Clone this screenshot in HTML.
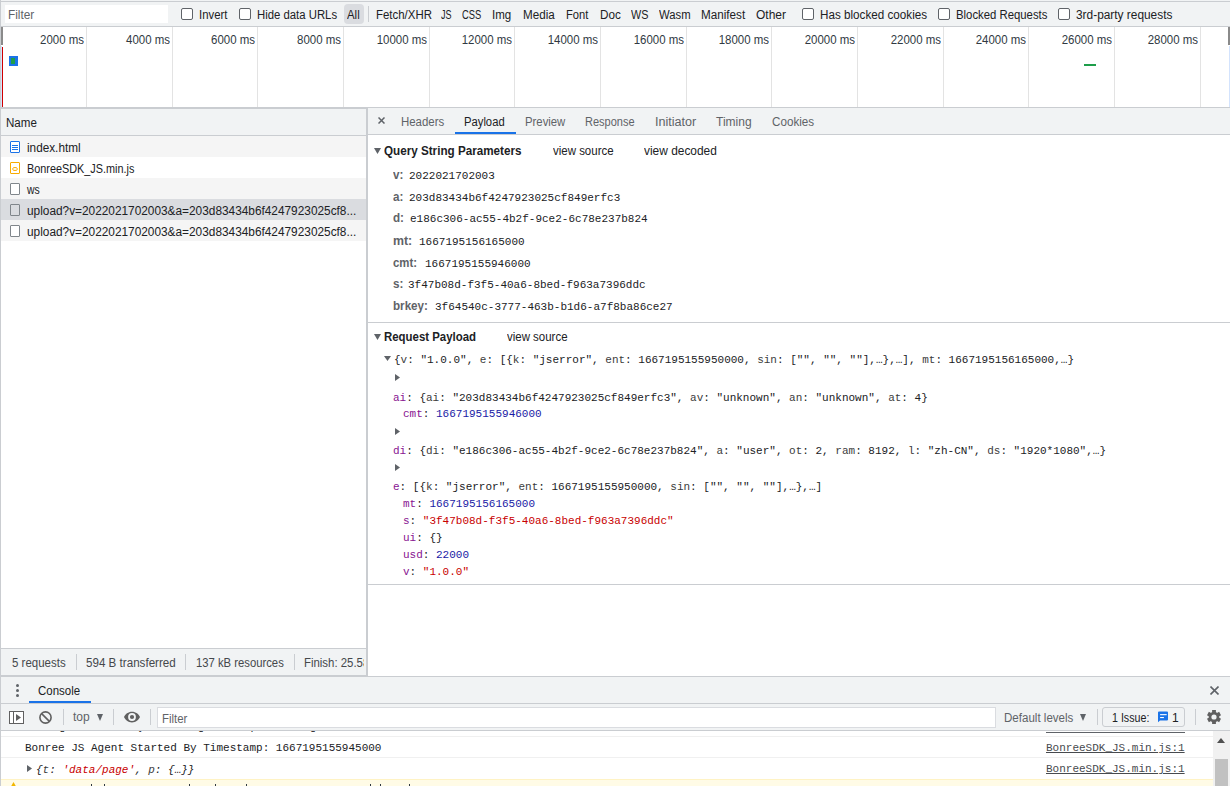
<!DOCTYPE html>
<html><head><meta charset="utf-8">
<style>
*{margin:0;padding:0;box-sizing:border-box}
html,body{width:1230px;height:786px;overflow:hidden;background:#fff;font-family:"Liberation Sans",sans-serif;font-size:12px;color:#202124}
.a{position:absolute}
.t{position:absolute;white-space:nowrap;line-height:14px;font-size:12px}
.m{position:absolute;white-space:nowrap;font-family:"Liberation Mono",monospace;font-size:11px;line-height:13px;color:#202124}
.cb{position:absolute;width:12px;height:12px;border:1px solid #5f6368;border-radius:2px;background:#fff}
.gl{position:absolute;top:27px;height:80px;width:1px;background:#e3e3e3}
.ic{position:absolute;left:10px;width:10px;height:12px;border:1px solid #80868b;border-radius:1px;background:#fff}
.k{color:#881391}
.n{color:#1a1aa6}
.s{color:#c80000}
.g{color:#3c3c3c}
.qk{font-weight:bold;color:#5f6368}
.tri-d{position:absolute;width:0;height:0;border-left:4px solid transparent;border-right:4px solid transparent;border-top:6px solid #5f6368}
.tri-r{position:absolute;width:0;height:0;border-top:3.5px solid transparent;border-bottom:3.5px solid transparent;border-left:5px solid #5f6368}
</style></head><body>
<div class="a" style="left:0;top:0;width:1px;height:786px;background:#cacdd1"></div>
<div class="a" style="left:1px;top:0px;width:1229px;height:26px;background:#f1f3f4;"></div>
<div class="a" style="left:0px;top:1px;width:1230px;height:1px;background:#cacdd1;"></div>
<div class="a" style="left:0px;top:26px;width:1230px;height:1px;background:#cacdd1;"></div>
<div class="a" style="left:5px;top:5px;width:163px;height:18px;background:#fff;"></div>
<div class="t" style="left:8px;top:8px;transform:scaleX(0.985);transform-origin:0 0;color:#5f6368">Filter</div>
<div class="cb" style="left:181px;top:8px"></div>
<div class="cb" style="left:239px;top:8px"></div>
<div class="cb" style="left:802px;top:8px"></div>
<div class="cb" style="left:938px;top:8px"></div>
<div class="cb" style="left:1058px;top:8px"></div>
<div class="t" style="left:199px;top:8px;transform:scaleX(0.945);transform-origin:0 0;">Invert</div>
<div class="t" style="left:257px;top:8px;transform:scaleX(0.945);transform-origin:0 0;">Hide data URLs</div>
<div class="a" style="left:344px;top:4px;width:20px;height:20px;background:#dadce0;border-radius:4px"></div>
<div class="t" style="left:347px;top:8px;transform:scaleX(0.95);transform-origin:0 0;">All</div>
<div class="a" style="left:368px;top:6px;width:1px;height:16px;background:#cacdd1;"></div>
<div class="t" style="left:376px;top:8px;transform:scaleX(0.953);transform-origin:0 0;">Fetch/XHR</div>
<div class="t" style="left:441px;top:8px;transform:scaleX(0.75);transform-origin:0 0;">JS</div>
<div class="t" style="left:462px;top:8px;transform:scaleX(0.78);transform-origin:0 0;">CSS</div>
<div class="t" style="left:492px;top:8px;transform:scaleX(0.96);transform-origin:0 0;">Img</div>
<div class="t" style="left:523px;top:8px;transform:scaleX(0.97);transform-origin:0 0;">Media</div>
<div class="t" style="left:566px;top:8px;transform:scaleX(0.93);transform-origin:0 0;">Font</div>
<div class="t" style="left:600px;top:8px;transform:scaleX(0.976);transform-origin:0 0;">Doc</div>
<div class="t" style="left:631px;top:8px;transform:scaleX(0.9);transform-origin:0 0;">WS</div>
<div class="t" style="left:659px;top:8px;transform:scaleX(0.94);transform-origin:0 0;">Wasm</div>
<div class="t" style="left:701px;top:8px;transform:scaleX(0.974);transform-origin:0 0;">Manifest</div>
<div class="t" style="left:756px;top:8px;">Other</div>
<div class="t" style="left:820px;top:8px;transform:scaleX(0.973);transform-origin:0 0;">Has blocked cookies</div>
<div class="t" style="left:956px;top:8px;transform:scaleX(0.945);transform-origin:0 0;">Blocked Requests</div>
<div class="t" style="left:1076px;top:8px;transform:scaleX(0.99);transform-origin:0 0;">3rd-party requests</div>
<div class="gl" style="left:86px"></div>
<div class="t" style="left:-116px;width:200px;text-align:right;top:33px;transform:scaleX(0.955);transform-origin:100% 0;color:#303942">2000 ms</div>
<div class="gl" style="left:172px"></div>
<div class="t" style="left:-30px;width:200px;text-align:right;top:33px;transform:scaleX(0.955);transform-origin:100% 0;color:#303942">4000 ms</div>
<div class="gl" style="left:257px"></div>
<div class="t" style="left:55px;width:200px;text-align:right;top:33px;transform:scaleX(0.955);transform-origin:100% 0;color:#303942">6000 ms</div>
<div class="gl" style="left:343px"></div>
<div class="t" style="left:141px;width:200px;text-align:right;top:33px;transform:scaleX(0.955);transform-origin:100% 0;color:#303942">8000 ms</div>
<div class="gl" style="left:429px"></div>
<div class="t" style="left:227px;width:200px;text-align:right;top:33px;transform:scaleX(0.955);transform-origin:100% 0;color:#303942">10000 ms</div>
<div class="gl" style="left:514px"></div>
<div class="t" style="left:312px;width:200px;text-align:right;top:33px;transform:scaleX(0.955);transform-origin:100% 0;color:#303942">12000 ms</div>
<div class="gl" style="left:600px"></div>
<div class="t" style="left:398px;width:200px;text-align:right;top:33px;transform:scaleX(0.955);transform-origin:100% 0;color:#303942">14000 ms</div>
<div class="gl" style="left:686px"></div>
<div class="t" style="left:484px;width:200px;text-align:right;top:33px;transform:scaleX(0.955);transform-origin:100% 0;color:#303942">16000 ms</div>
<div class="gl" style="left:771px"></div>
<div class="t" style="left:569px;width:200px;text-align:right;top:33px;transform:scaleX(0.955);transform-origin:100% 0;color:#303942">18000 ms</div>
<div class="gl" style="left:857px"></div>
<div class="t" style="left:655px;width:200px;text-align:right;top:33px;transform:scaleX(0.955);transform-origin:100% 0;color:#303942">20000 ms</div>
<div class="gl" style="left:943px"></div>
<div class="t" style="left:741px;width:200px;text-align:right;top:33px;transform:scaleX(0.955);transform-origin:100% 0;color:#303942">22000 ms</div>
<div class="gl" style="left:1028px"></div>
<div class="t" style="left:826px;width:200px;text-align:right;top:33px;transform:scaleX(0.955);transform-origin:100% 0;color:#303942">24000 ms</div>
<div class="gl" style="left:1114px"></div>
<div class="t" style="left:912px;width:200px;text-align:right;top:33px;transform:scaleX(0.955);transform-origin:100% 0;color:#303942">26000 ms</div>
<div class="gl" style="left:1200px"></div>
<div class="t" style="left:998px;width:200px;text-align:right;top:33px;transform:scaleX(0.955);transform-origin:100% 0;color:#303942">28000 ms</div>
<div class="a" style="left:1px;top:27px;width:2px;height:18px;background:#8a8a8a;"></div>
<div class="a" style="left:2px;top:47px;width:1px;height:60px;background:#d00000;"></div>
<div class="a" style="left:9px;top:56px;width:9px;height:10px;background:#1a73e8;"></div>
<div class="a" style="left:11px;top:58px;width:4px;height:6px;background:#1e9e4a;"></div>
<div class="a" style="left:1084px;top:64px;width:12px;height:2px;background:#1e9e4a;"></div>
<div class="a" style="left:1228px;top:27px;width:2px;height:18px;background:#8a8a8a;"></div>
<div class="a" style="left:1229px;top:46px;width:1px;height:61px;background:#d3e3fd;"></div>
<div class="a" style="left:1px;top:46px;width:1px;height:61px;background:#d3e3fd;"></div>
<div class="a" style="left:0px;top:107px;width:1230px;height:1px;background:#cacdd1;"></div>
<div class="a" style="left:1px;top:109px;width:365px;height:26px;background:#f1f3f4;"></div>
<div class="a" style="left:0px;top:108px;width:366px;height:1px;background:#cacdd1;"></div>
<div class="a" style="left:0px;top:135px;width:366px;height:1px;background:#cacdd1;"></div>
<div class="t" style="left:6px;top:116px;transform:scaleX(0.966);transform-origin:0 0;">Name</div>
<div class="a" style="left:1px;top:136px;width:365px;height:21px;background:#f5f5f5;"></div>
<div class="a" style="left:1px;top:178px;width:365px;height:21px;background:#f5f5f5;"></div>
<div class="a" style="left:1px;top:199px;width:365px;height:21px;background:#dadce0;"></div>
<div class="a" style="left:1px;top:220px;width:365px;height:21px;background:#f5f5f5;"></div>
<div class="ic" style="top:141px;border-color:#1a73e8"></div>
<div class="a" style="left:12px;top:145px;width:6px;height:1px;background:#1a73e8;"></div>
<div class="a" style="left:12px;top:147px;width:6px;height:1px;background:#1a73e8;"></div>
<div class="a" style="left:12px;top:149px;width:6px;height:1px;background:#1a73e8;"></div>
<div class="ic" style="top:162px;border-color:#f9ab00"></div>
<svg class="a" style="left:12px;top:167px" width="6" height="4" viewBox="0 0 6 4"><path d="M1.5 0.6H4.5L5.4 2L4.5 3.4H1.5L0.6 2z" fill="none" stroke="#f9ab00" stroke-width="1"/></svg>
<div class="ic" style="top:183px"></div>
<div class="ic" style="top:225px"></div>
<div class="ic" style="top:204px;background:transparent"></div>
<div class="t" style="left:27px;top:141px;transform:scaleX(0.98);transform-origin:0 0;">index.html</div>
<div class="t" style="left:27px;top:162px;transform:scaleX(0.904);transform-origin:0 0;">BonreeSDK_JS.min.js</div>
<div class="t" style="left:27px;top:183px;transform:scaleX(0.87);transform-origin:0 0;">ws</div>
<div class="t" style="left:27px;top:204px;transform:scaleX(0.987);transform-origin:0 0;">upload?v=2022021702003&amp;a=203d83434b6f4247923025cf8...</div>
<div class="t" style="left:27px;top:225px;transform:scaleX(0.987);transform-origin:0 0;">upload?v=2022021702003&amp;a=203d83434b6f4247923025cf8...</div>
<div class="a" style="left:0px;top:648px;width:366px;height:1px;background:#cacdd1;"></div>
<div class="a" style="left:1px;top:649px;width:365px;height:26px;background:#f1f3f4;"></div>
<div class="t" style="left:12px;top:656px;transform:scaleX(0.957);transform-origin:0 0;color:#45484c">5 requests</div>
<div class="a" style="left:76px;top:654px;width:1px;height:16px;background:#cacdd1;"></div>
<div class="t" style="left:86px;top:656px;transform:scaleX(0.968);transform-origin:0 0;color:#45484c">594 B transferred</div>
<div class="a" style="left:185px;top:654px;width:1px;height:16px;background:#cacdd1;"></div>
<div class="t" style="left:196px;top:656px;transform:scaleX(0.94);transform-origin:0 0;color:#45484c">137 kB resources</div>
<div class="a" style="left:294px;top:654px;width:1px;height:16px;background:#cacdd1;"></div>
<div class="a" style="left:304px;top:650px;width:60px;height:24px;overflow:hidden"><div class="t" style="left:0;top:6px;transform:scaleX(0.95);transform-origin:0 0;color:#45484c">Finish: 25.58 s</div></div>
<div class="a" style="left:366px;top:108px;width:2px;height:568px;background:#cacdd1;"></div>
<div class="a" style="left:368px;top:108px;width:862px;height:26px;background:#f1f3f4;"></div>
<div class="a" style="left:368px;top:134px;width:862px;height:1px;background:#cacdd1;"></div>
<svg class="a" style="left:377.5px;top:117px" width="7" height="7" viewBox="0 0 7 7"><path d="M0.5 0.5L6.5 6.5M6.5 0.5L0.5 6.5" stroke="#5f6368" stroke-width="1.5"/></svg>
<div class="t" style="left:401px;top:115px;transform:scaleX(0.953);transform-origin:0 0;color:#5f6368">Headers</div>
<div class="t" style="left:464px;top:115px;transform:scaleX(0.937);transform-origin:0 0;color:#202124">Payload</div>
<div class="t" style="left:525px;top:115px;transform:scaleX(0.944);transform-origin:0 0;color:#5f6368">Preview</div>
<div class="t" style="left:585px;top:115px;transform:scaleX(0.917);transform-origin:0 0;color:#5f6368">Response</div>
<div class="t" style="left:655px;top:115px;transform:scaleX(1.05);transform-origin:0 0;color:#5f6368">Initiator</div>
<div class="t" style="left:716px;top:115px;color:#5f6368">Timing</div>
<div class="t" style="left:772px;top:115px;transform:scaleX(0.972);transform-origin:0 0;color:#5f6368">Cookies</div>
<div class="a" style="left:455px;top:132px;width:61px;height:2px;background:#1a73e8;"></div>
<svg class="a" style="left:374px;top:148px" width="7" height="6" viewBox="0 0 7 6"><path d="M0 0H7L3.5 6z" fill="#5f6368"/></svg>
<div class="t" style="left:384px;top:144px;transform:scaleX(0.972);transform-origin:0 0;font-weight:bold">Query String Parameters</div>
<div class="t" style="left:553px;top:144px;transform:scaleX(0.956);transform-origin:0 0;">view source</div>
<div class="t" style="left:644px;top:144px;transform:scaleX(0.993);transform-origin:0 0;">view decoded</div>
<div class="t" style="left:393px;top:168px;transform:scaleX(0.97);transform-origin:0 0;font-weight:bold;color:#5f6368">v:</div>
<div class="m" style="left:409px;top:170px">2022021702003</div>
<div class="t" style="left:393px;top:190px;transform:scaleX(0.97);transform-origin:0 0;font-weight:bold;color:#5f6368">a:</div>
<div class="m" style="left:409px;top:192px">203d83434b6f4247923025cf849erfc3</div>
<div class="t" style="left:393px;top:211px;transform:scaleX(0.97);transform-origin:0 0;font-weight:bold;color:#5f6368">d:</div>
<div class="m" style="left:410px;top:213px">e186c306-ac55-4b2f-9ce2-6c78e237b824</div>
<div class="t" style="left:393px;top:234px;transform:scaleX(1.03);transform-origin:0 0;font-weight:bold;color:#5f6368">mt:</div>
<div class="m" style="left:419px;top:236px">1667195156165000</div>
<div class="t" style="left:393px;top:256px;transform:scaleX(0.95);transform-origin:0 0;font-weight:bold;color:#5f6368">cmt:</div>
<div class="m" style="left:425px;top:258px">1667195155946000</div>
<div class="t" style="left:393px;top:277px;transform:scaleX(0.97);transform-origin:0 0;font-weight:bold;color:#5f6368">s:</div>
<div class="m" style="left:408px;top:279px">3f47b08d-f3f5-40a6-8bed-f963a7396ddc</div>
<div class="t" style="left:393px;top:299px;transform:scaleX(0.97);transform-origin:0 0;font-weight:bold;color:#5f6368">brkey:</div>
<div class="m" style="left:435px;top:301px">3f64540c-3777-463b-b1d6-a7f8ba86ce27</div>
<div class="a" style="left:368px;top:322px;width:862px;height:1px;background:#cacdd1;"></div>
<svg class="a" style="left:374px;top:334px" width="7" height="6" viewBox="0 0 7 6"><path d="M0 0H7L3.5 6z" fill="#5f6368"/></svg>
<div class="t" style="left:384px;top:330px;transform:scaleX(0.951);transform-origin:0 0;font-weight:bold">Request Payload</div>
<div class="t" style="left:507px;top:330px;transform:scaleX(0.955);transform-origin:0 0;">view source</div>
<svg class="a" style="left:384px;top:356px" width="7" height="5" viewBox="0 0 7 5"><path d="M0 0H7L3.5 5z" fill="#5f6368"/></svg>
<div class="m" style="left:394px;top:354px;">{<span class="g">v</span>: "1.0.0", <span class="g">e</span>: [{<span class="g">k</span>: "jserror", <span class="g">ent</span>: 1667195155950000, <span class="g">sin</span>: ["", "", ""],…},…], <span class="g">mt</span>: 1667195156165000,…}</div>
<svg class="a" style="left:395px;top:374px" width="5" height="7" viewBox="0 0 5 7"><path d="M0 0V7L5 3.5z" fill="#5f6368"/></svg>
<div class="m" style="left:393px;top:392px;"><span class="k">ai</span>: {<span class="g">ai</span>: "203d83434b6f4247923025cf849erfc3", <span class="g">av</span>: "unknown", <span class="g">an</span>: "unknown", <span class="g">at</span>: 4}</div>
<div class="m" style="left:403px;top:408px;"><span class="k">cmt</span>: <span class="n">1667195155946000</span></div>
<svg class="a" style="left:395px;top:428px" width="5" height="7" viewBox="0 0 5 7"><path d="M0 0V7L5 3.5z" fill="#5f6368"/></svg>
<div class="m" style="left:393px;top:445px;"><span class="k">di</span>: {<span class="g">di</span>: "e186c306-ac55-4b2f-9ce2-6c78e237b824", <span class="g">a</span>: "user", <span class="g">ot</span>: 2, <span class="g">ram</span>: 8192, <span class="g">l</span>: "zh-CN", <span class="g">ds</span>: "1920*1080",…}</div>
<svg class="a" style="left:395px;top:464px" width="5" height="7" viewBox="0 0 5 7"><path d="M0 0V7L5 3.5z" fill="#5f6368"/></svg>
<div class="m" style="left:393px;top:481px;"><span class="k">e</span>: [{<span class="g">k</span>: "jserror", <span class="g">ent</span>: 1667195155950000, <span class="g">sin</span>: ["", "", ""],…},…]</div>
<div class="m" style="left:403px;top:498px;"><span class="k">mt</span>: <span class="n">1667195156165000</span></div>
<div class="m" style="left:403px;top:515px;"><span class="k">s</span>: <span class="s">"3f47b08d-f3f5-40a6-8bed-f963a7396ddc"</span></div>
<div class="m" style="left:403px;top:532px;"><span class="k">ui</span>: {}</div>
<div class="m" style="left:403px;top:549px;"><span class="k">usd</span>: <span class="n">22000</span></div>
<div class="m" style="left:403px;top:566px;"><span class="k">v</span>: <span class="s">"1.0.0"</span></div>
<div class="a" style="left:368px;top:584px;width:862px;height:1px;background:#cacdd1;"></div>
<div class="a" style="left:0px;top:675px;width:368px;height:1px;background:#cacdd1;"></div>
<div class="a" style="left:0px;top:676px;width:1230px;height:1px;background:#cacdd1;"></div>
<div class="a" style="left:1px;top:677px;width:1229px;height:26px;background:#f1f3f4;"></div>
<div class="a" style="left:0px;top:703px;width:1230px;height:1px;background:#cacdd1;"></div>
<div class="a" style="left:16px;top:684px;width:3px;height:3px;border-radius:50%;background:#5f6368"></div>
<div class="a" style="left:16px;top:689px;width:3px;height:3px;border-radius:50%;background:#5f6368"></div>
<div class="a" style="left:16px;top:694px;width:3px;height:3px;border-radius:50%;background:#5f6368"></div>
<div class="t" style="left:38px;top:684px;transform:scaleX(0.955);transform-origin:0 0;">Console</div>
<div class="a" style="left:29px;top:701px;width:62px;height:2px;background:#1a73e8;"></div>
<svg class="a" style="left:1209.5px;top:685.5px" width="9" height="9" viewBox="0 0 9 9"><path d="M0.5 0.5L8.5 8.5M8.5 0.5L0.5 8.5" stroke="#5f6368" stroke-width="1.6"/></svg>
<div class="a" style="left:1px;top:704px;width:1229px;height:26px;background:#f1f3f4;"></div>
<div class="a" style="left:0px;top:730px;width:1230px;height:1px;background:#cacdd1;"></div>
<svg class="a" style="left:9px;top:711px" width="15" height="13" viewBox="0 0 15 13"><rect x="0.5" y="0.5" width="14" height="12" fill="#fff" stroke="#606060"/><path d="M4.5 0.5V12.5" stroke="#606060"/><path d="M7 3V10L12 6.5z" fill="#606060"/></svg>
<svg class="a" style="left:39px;top:711px" width="13" height="13" viewBox="0 0 13 13"><circle cx="6.5" cy="6.5" r="5.6" fill="none" stroke="#606060" stroke-width="1.6"/><path d="M2.6 2.6L10.4 10.4" stroke="#606060" stroke-width="1.6"/></svg>
<div class="a" style="left:63px;top:709px;width:1px;height:16px;background:#cacdd1;"></div>
<div class="t" style="left:73px;top:710px;color:#5f6368">top</div>
<div class="a" style="left:97px;top:714px;width:0;height:0;border-left:3.5px solid transparent;border-right:3.5px solid transparent;border-top:7px solid #5f6368"></div>
<div class="a" style="left:113px;top:709px;width:1px;height:16px;background:#cacdd1;"></div>
<svg class="a" style="left:123px;top:710px" width="18" height="14" viewBox="0 0 18 14"><path d="M9 1.7C5.2 1.7 2.2 4 1 7c1.2 3 4.2 5.4 8 5.4s6.8-2.4 8-5.4c-1.2-3-4.2-5.3-8-5.3z" fill="#606060"/><circle cx="9" cy="7" r="3.9" fill="#f1f3f4"/><circle cx="9" cy="7" r="2.1" fill="#606060"/></svg>
<div class="a" style="left:150px;top:709px;width:1px;height:16px;background:#cacdd1;"></div>
<div class="a" style="left:157px;top:707px;width:839px;height:21px;background:#fff;border:1px solid #dadce0"></div>
<div class="t" style="left:162px;top:712px;transform:scaleX(0.95);transform-origin:0 0;color:#5f6368">Filter</div>
<div class="t" style="left:1004px;top:711px;transform:scaleX(0.963);transform-origin:0 0;color:#5f6368">Default levels</div>
<div class="a" style="left:1080px;top:714px;width:0;height:0;border-left:3.5px solid transparent;border-right:3.5px solid transparent;border-top:7px solid #5f6368"></div>
<div class="a" style="left:1097px;top:709px;width:1px;height:16px;background:#cacdd1;"></div>
<div class="a" style="left:1102px;top:707px;width:83px;height:20px;border:1px solid #cacdd1;border-radius:3px"></div>
<div class="t" style="left:1112px;top:711px;transform:scaleX(0.89);transform-origin:0 0;">1 Issue:</div>
<svg class="a" style="left:1157px;top:711px" width="12" height="12" viewBox="0 0 12 12"><path d="M2 0.5H10A1 1 0 0 1 11 1.5V8.5A1 1 0 0 1 10 9.5H3L1 11.2V1.5A1 1 0 0 1 2 0.5z" fill="#1a73e8"/><rect x="3.1" y="3.1" width="6.6" height="1.1" fill="#fff"/><rect x="3.1" y="6" width="3.8" height="1.1" fill="#fff"/></svg>
<div class="t" style="left:1172px;top:711px;">1</div>
<div class="a" style="left:1195px;top:709px;width:1px;height:16px;background:#cacdd1;"></div>
<svg class="a" style="left:1206px;top:709px" width="16" height="16" viewBox="0 0 16 16"><g fill="#606060"><circle cx="8" cy="8" r="5.3"/><rect x="6.1" y="1" width="3.8" height="4" transform="rotate(0 8 8)"/><rect x="6.1" y="1" width="3.8" height="4" transform="rotate(60 8 8)"/><rect x="6.1" y="1" width="3.8" height="4" transform="rotate(120 8 8)"/><rect x="6.1" y="1" width="3.8" height="4" transform="rotate(180 8 8)"/><rect x="6.1" y="1" width="3.8" height="4" transform="rotate(240 8 8)"/><rect x="6.1" y="1" width="3.8" height="4" transform="rotate(300 8 8)"/></g><circle cx="8" cy="8" r="2.6" fill="#f1f3f4"/></svg>
<div class="a" style="left:1px;top:731px;width:1212px;height:5px;overflow:hidden"><div class="m" style="left:25px;top:-10px;white-space:pre">     g           y        g       p        g</div></div>
<div class="a" style="left:1046px;top:732px;width:139px;height:1px;background:#5f6368;"></div>
<div class="a" style="left:1px;top:736px;width:1212px;height:1px;background:#f0f0f0;"></div>
<div class="m" style="left:25px;top:742px;">Bonree JS Agent Started By Timestamp: 1667195155945000</div>
<div class="m" style="left:1046px;top:742px;text-decoration:underline;color:#474a4e">BonreeSDK_JS.min.js:1</div>
<div class="a" style="left:1px;top:757px;width:1212px;height:1px;background:#f0f0f0;"></div>
<svg class="a" style="left:27px;top:765px" width="5" height="7" viewBox="0 0 5 7"><path d="M0 0V7L5 3.5z" fill="#5f6368"/></svg>
<div class="m" style="left:36px;top:764px;font-style:italic">{<span class="g">t</span>: <span class="s">'data/page'</span>, <span class="g">p</span>: {…}}</div>
<div class="m" style="left:1046px;top:763px;text-decoration:underline;color:#474a4e">BonreeSDK_JS.min.js:1</div>
<div class="a" style="left:1px;top:779px;width:1212px;height:7px;background:#fffbe6;border-top:1px solid #fff3c4"></div>
<svg class="a" style="left:9px;top:782px" width="9" height="8" viewBox="0 0 9 8"><path d="M4.5 0L9 8H0z" fill="#f2b600"/></svg>
<div class="a" style="left:91px;top:784px;width:1px;height:2px;background:#303942;"></div>
<div class="a" style="left:104px;top:784px;width:1px;height:2px;background:#303942;"></div>
<div class="a" style="left:189px;top:784px;width:1px;height:2px;background:#303942;"></div>
<div class="a" style="left:215px;top:784px;width:1px;height:2px;background:#303942;"></div>
<div class="a" style="left:246px;top:784px;width:1px;height:2px;background:#303942;"></div>
<div class="a" style="left:370px;top:784px;width:1px;height:2px;background:#303942;"></div>
<div class="a" style="left:380px;top:784px;width:1px;height:2px;background:#303942;"></div>
<div class="a" style="left:409px;top:784px;width:1px;height:2px;background:#303942;"></div>
<div class="a" style="left:1213px;top:731px;width:17px;height:55px;background:#f1f1f1;"></div>
<div class="a" style="left:1217px;top:738px;width:0;height:0;border-left:4px solid transparent;border-right:4px solid transparent;border-bottom:5px solid #505050"></div>
<div class="a" style="left:1215px;top:759px;width:13px;height:27px;background:#c1c1c1;"></div>
</body></html>
